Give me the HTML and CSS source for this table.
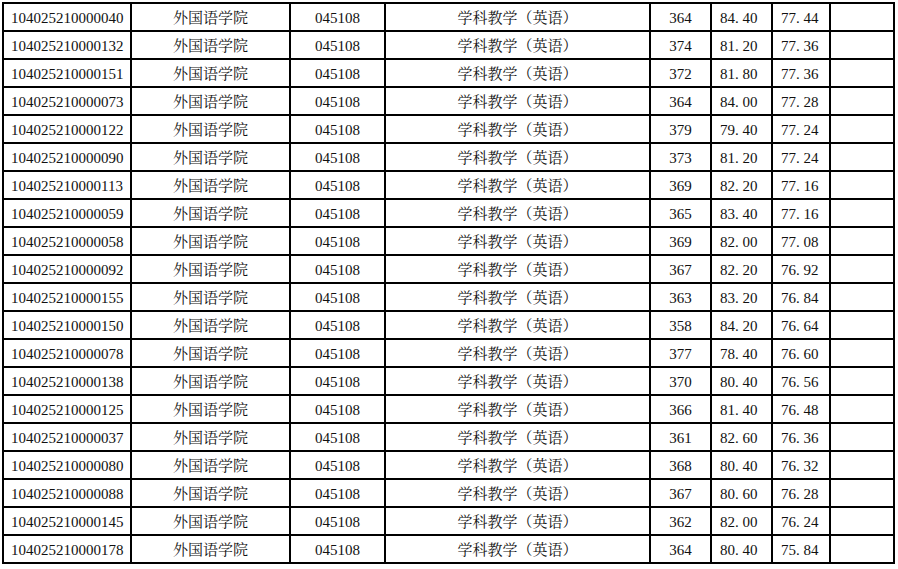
FILE: index.html
```html
<!DOCTYPE html>
<html lang="zh-CN">
<head>
<meta charset="utf-8">
<title>成绩表</title>
<link rel="stylesheet" href="styles.css">
</head>
<body>
<table class="grid">
<colgroup>
<col class="c1"><col class="c2"><col class="c3"><col class="c4"><col class="c5"><col class="c6"><col class="c7"><col class="c8">
</colgroup>
<tbody>
<tr><td class="id">104025210000040</td><td class="ctr">外国语学院</td><td class="ctr">045108</td><td class="ctr">学科教学（英语）</td><td class="ctr">364</td><td class="sc">84<span class="dt">.</span>40</td><td class="sc">77<span class="dt">.</span>44</td><td></td></tr>
<tr><td class="id">104025210000132</td><td class="ctr">外国语学院</td><td class="ctr">045108</td><td class="ctr">学科教学（英语）</td><td class="ctr">374</td><td class="sc">81<span class="dt">.</span>20</td><td class="sc">77<span class="dt">.</span>36</td><td></td></tr>
<tr><td class="id">104025210000151</td><td class="ctr">外国语学院</td><td class="ctr">045108</td><td class="ctr">学科教学（英语）</td><td class="ctr">372</td><td class="sc">81<span class="dt">.</span>80</td><td class="sc">77<span class="dt">.</span>36</td><td></td></tr>
<tr><td class="id">104025210000073</td><td class="ctr">外国语学院</td><td class="ctr">045108</td><td class="ctr">学科教学（英语）</td><td class="ctr">364</td><td class="sc">84<span class="dt">.</span>00</td><td class="sc">77<span class="dt">.</span>28</td><td></td></tr>
<tr><td class="id">104025210000122</td><td class="ctr">外国语学院</td><td class="ctr">045108</td><td class="ctr">学科教学（英语）</td><td class="ctr">379</td><td class="sc">79<span class="dt">.</span>40</td><td class="sc">77<span class="dt">.</span>24</td><td></td></tr>
<tr><td class="id">104025210000090</td><td class="ctr">外国语学院</td><td class="ctr">045108</td><td class="ctr">学科教学（英语）</td><td class="ctr">373</td><td class="sc">81<span class="dt">.</span>20</td><td class="sc">77<span class="dt">.</span>24</td><td></td></tr>
<tr><td class="id">104025210000113</td><td class="ctr">外国语学院</td><td class="ctr">045108</td><td class="ctr">学科教学（英语）</td><td class="ctr">369</td><td class="sc">82<span class="dt">.</span>20</td><td class="sc">77<span class="dt">.</span>16</td><td></td></tr>
<tr><td class="id">104025210000059</td><td class="ctr">外国语学院</td><td class="ctr">045108</td><td class="ctr">学科教学（英语）</td><td class="ctr">365</td><td class="sc">83<span class="dt">.</span>40</td><td class="sc">77<span class="dt">.</span>16</td><td></td></tr>
<tr><td class="id">104025210000058</td><td class="ctr">外国语学院</td><td class="ctr">045108</td><td class="ctr">学科教学（英语）</td><td class="ctr">369</td><td class="sc">82<span class="dt">.</span>00</td><td class="sc">77<span class="dt">.</span>08</td><td></td></tr>
<tr><td class="id">104025210000092</td><td class="ctr">外国语学院</td><td class="ctr">045108</td><td class="ctr">学科教学（英语）</td><td class="ctr">367</td><td class="sc">82<span class="dt">.</span>20</td><td class="sc">76<span class="dt">.</span>92</td><td></td></tr>
<tr><td class="id">104025210000155</td><td class="ctr">外国语学院</td><td class="ctr">045108</td><td class="ctr">学科教学（英语）</td><td class="ctr">363</td><td class="sc">83<span class="dt">.</span>20</td><td class="sc">76<span class="dt">.</span>84</td><td></td></tr>
<tr><td class="id">104025210000150</td><td class="ctr">外国语学院</td><td class="ctr">045108</td><td class="ctr">学科教学（英语）</td><td class="ctr">358</td><td class="sc">84<span class="dt">.</span>20</td><td class="sc">76<span class="dt">.</span>64</td><td></td></tr>
<tr><td class="id">104025210000078</td><td class="ctr">外国语学院</td><td class="ctr">045108</td><td class="ctr">学科教学（英语）</td><td class="ctr">377</td><td class="sc">78<span class="dt">.</span>40</td><td class="sc">76<span class="dt">.</span>60</td><td></td></tr>
<tr><td class="id">104025210000138</td><td class="ctr">外国语学院</td><td class="ctr">045108</td><td class="ctr">学科教学（英语）</td><td class="ctr">370</td><td class="sc">80<span class="dt">.</span>40</td><td class="sc">76<span class="dt">.</span>56</td><td></td></tr>
<tr><td class="id">104025210000125</td><td class="ctr">外国语学院</td><td class="ctr">045108</td><td class="ctr">学科教学（英语）</td><td class="ctr">366</td><td class="sc">81<span class="dt">.</span>40</td><td class="sc">76<span class="dt">.</span>48</td><td></td></tr>
<tr><td class="id">104025210000037</td><td class="ctr">外国语学院</td><td class="ctr">045108</td><td class="ctr">学科教学（英语）</td><td class="ctr">361</td><td class="sc">82<span class="dt">.</span>60</td><td class="sc">76<span class="dt">.</span>36</td><td></td></tr>
<tr><td class="id">104025210000080</td><td class="ctr">外国语学院</td><td class="ctr">045108</td><td class="ctr">学科教学（英语）</td><td class="ctr">368</td><td class="sc">80<span class="dt">.</span>40</td><td class="sc">76<span class="dt">.</span>32</td><td></td></tr>
<tr><td class="id">104025210000088</td><td class="ctr">外国语学院</td><td class="ctr">045108</td><td class="ctr">学科教学（英语）</td><td class="ctr">367</td><td class="sc">80<span class="dt">.</span>60</td><td class="sc">76<span class="dt">.</span>28</td><td></td></tr>
<tr><td class="id">104025210000145</td><td class="ctr">外国语学院</td><td class="ctr">045108</td><td class="ctr">学科教学（英语）</td><td class="ctr">362</td><td class="sc">82<span class="dt">.</span>00</td><td class="sc">76<span class="dt">.</span>24</td><td></td></tr>
<tr><td class="id">104025210000178</td><td class="ctr">外国语学院</td><td class="ctr">045108</td><td class="ctr">学科教学（英语）</td><td class="ctr">364</td><td class="sc">80<span class="dt">.</span>40</td><td class="sc">75<span class="dt">.</span>84</td><td></td></tr>
</tbody>
</table>
</body>
</html>
```
FILE: styles.css
```css
html, body {
  margin: 0;
  padding: 0;
  background: #ffffff;
}
body {
  font-family: "Liberation Serif", "Noto Serif CJK SC", "Noto Sans CJK SC", serif;
  font-size: 15px;
  color: #111111;
}
.grid {
  border-collapse: collapse;
  table-layout: fixed;
  width: 893px;
  margin: 2px 0 0 2px;
}
.c1 { width: 128px; }
.c2 { width: 159px; }
.c3 { width: 95px; }
.c4 { width: 265px; }
.c5 { width: 61px; }
.c6 { width: 61px; }
.c7 { width: 58px; }
.c8 { width: 64px; }
.grid tr {
  height: 28px;
}
.grid td {
  border: 2px solid #000000;
  padding: 2px 0 0 0;
  height: 24px;
  line-height: 24px;
  vertical-align: middle;
  white-space: nowrap;
  overflow: hidden;
}
.id {
  text-align: left;
  padding-left: 7px !important;
}
.ctr {
  text-align: center;
}
.sc {
  text-align: left;
  padding-left: 8px !important;
}
.dt {
  display: inline-block;
  width: 0.5em;
  text-align: left;
}
```
